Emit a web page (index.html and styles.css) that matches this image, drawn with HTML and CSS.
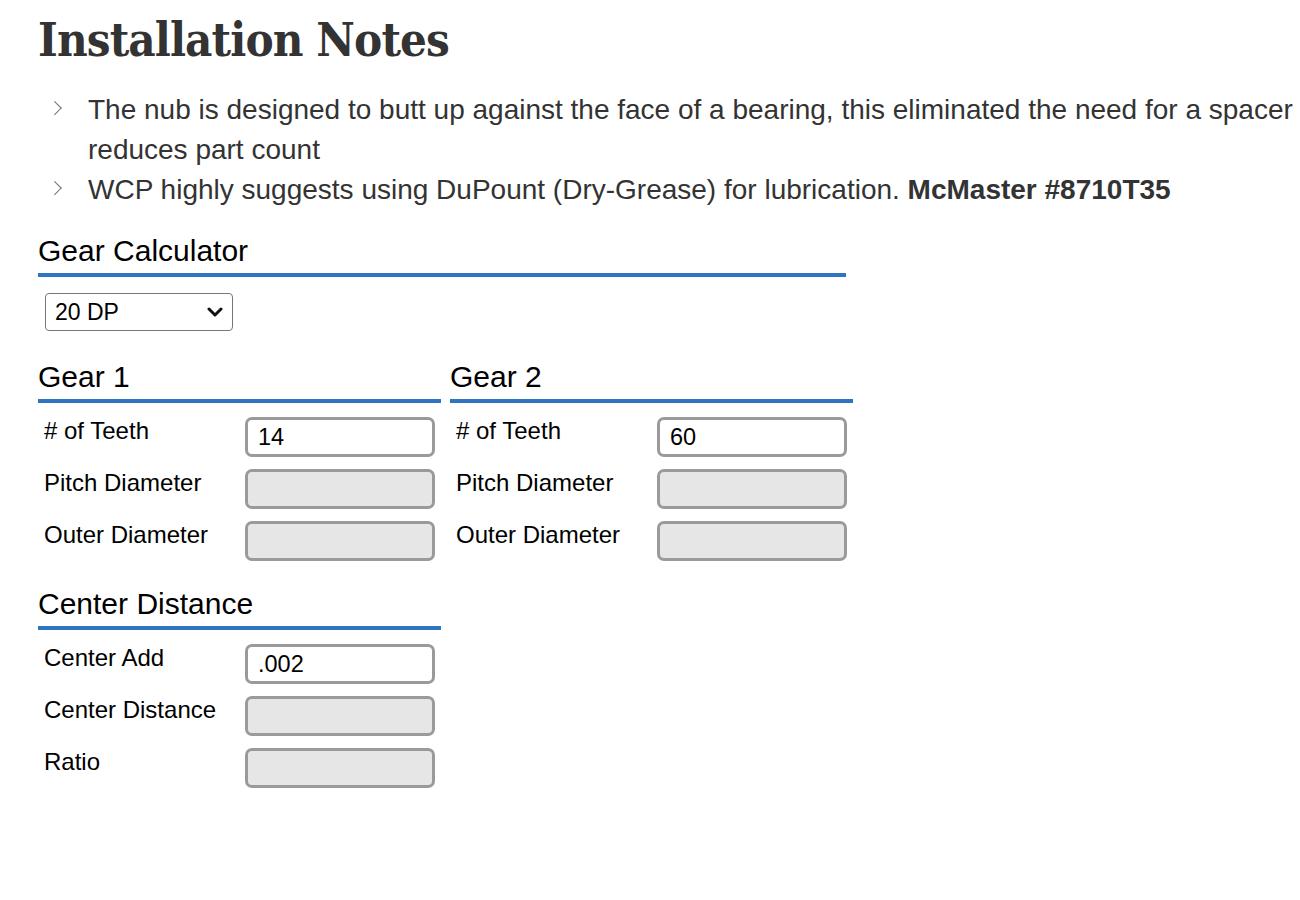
FILE: index.html
```html
<!DOCTYPE html>
<html lang="en">
<head>
<meta charset="utf-8">
<title>Installation Notes</title>
<link rel="stylesheet" href="styles.css">
</head>
<body>
<main class="page">
  <h1 class="title">Installation Notes</h1>
  <ul class="notes">
    <li>The nub is designed to butt up against the face of a bearing, this eliminated the need for a spacer reduces part count</li>
    <li>WCP highly suggests using DuPount (Dry-Grease) for lubrication. <strong>McMaster #8710T35</strong></li>
  </ul>

  <section class="calc">
    <h3 class="sec-head">Gear Calculator</h3>
    <div class="select-wrap">
      <select class="dp-select">
        <option>20 DP</option>
        <option>32 DP</option>
      </select>
      <svg class="select-arrow" width="16" height="10" viewBox="0 0 16 10"><polyline points="2,2 8,8 14,2" fill="none" stroke="#111" stroke-width="3" stroke-linecap="round" stroke-linejoin="round"/></svg>
    </div>
  </section>

  <div class="gears">
    <section class="gear">
      <h3 class="sec-head">Gear 1</h3>
      <div class="row"><label class="lbl"># of Teeth</label><input class="field" type="text" value="14"></div>
      <div class="row"><label class="lbl">Pitch Diameter</label><input class="field ro" type="text" readonly></div>
      <div class="row"><label class="lbl">Outer Diameter</label><input class="field ro" type="text" readonly></div>
    </section>
    <section class="gear">
      <h3 class="sec-head">Gear 2</h3>
      <div class="row"><label class="lbl"># of Teeth</label><input class="field" type="text" value="60"></div>
      <div class="row"><label class="lbl">Pitch Diameter</label><input class="field ro" type="text" readonly></div>
      <div class="row"><label class="lbl">Outer Diameter</label><input class="field ro" type="text" readonly></div>
    </section>
  </div>

  <section class="center">
    <h3 class="sec-head">Center Distance</h3>
    <div class="row"><label class="lbl">Center Add</label><input class="field" type="text" value=".002"></div>
    <div class="row"><label class="lbl">Center Distance</label><input class="field ro" type="text" readonly></div>
    <div class="row"><label class="lbl">Ratio</label><input class="field ro" type="text" readonly></div>
  </section>
</main>
</body>
</html>
```

FILE: styles.css
```css
html, body {
  margin: 0;
  padding: 0;
  background: #fff;
}
body {
  font-family: "Liberation Sans", Arial, Helvetica, sans-serif;
  color: #000;
}
.page {
  padding: 10px 0 0 38px;
}
.title {
  margin: 0;
  font-family: "DejaVu Serif Condensed", "DejaVu Serif", "Liberation Serif", serif;
  font-weight: 600;
  font-size: 47px;
  line-height: 60px;
  color: #333;
  letter-spacing: -0.9px;
}
.notes {
  list-style: none;
  margin: 20px 0 0 0;
  padding: 0 0 0 50px;
  font-size: 28px;
  line-height: 40px;
  color: #333;
}
.notes li {
  position: relative;
}
.notes li::before {
  content: "";
  position: absolute;
  left: -38px;
  top: 13px;
  width: 8.5px;
  height: 8.5px;
  border-top: 1.8px solid #6e6e6e;
  border-right: 1.8px solid #6e6e6e;
  transform: rotate(45deg);
}
.notes strong {
  font-weight: 700;
}
.calc {
  width: 808px;
  margin-top: 23px;
}
.sec-head {
  margin: 0;
  font-size: 30px;
  line-height: 36px;
  font-weight: 400;
  color: #000;
  padding-bottom: 4px;
  border-bottom: 4px solid #2f74c0;
}
.select-wrap {
  position: relative;
  display: inline-block;
  margin: 16px 0 0 7px;
}
.dp-select {
  appearance: none;
  -webkit-appearance: none;
  width: 188px;
  height: 38px;
  box-sizing: border-box;
  border: 1px solid #767676;
  border-radius: 4px;
  background: #fff;
  padding: 0 0 0 9px;
  font-family: "Liberation Sans", Arial, sans-serif;
  font-size: 23px;
  color: #000;
  display: block;
}
.select-arrow {
  position: absolute;
  right: 10px;
  top: 14px;
  pointer-events: none;
}
.gears {
  display: grid;
  grid-template-columns: 403px 403px;
  column-gap: 9px;
  margin-top: 28px;
}
.row {
  display: flex;
  align-items: flex-start;
  margin-bottom: 12px;
}
.sec-head + .row {
  margin-top: 14px;
}
.lbl {
  width: 201px;
  padding-left: 6px;
  font-size: 24px;
  line-height: 28px;
  color: #000;
}
.field {
  width: 190px;
  height: 40px;
  box-sizing: border-box;
  border: 3px solid #9a9a9a;
  border-radius: 7px;
  background: #fff;
  padding: 0 10px;
  font-family: "Liberation Sans", Arial, sans-serif;
  font-size: 23.5px;
  color: #000;
  margin: 0;
  outline: none;
}
.field.ro {
  background: #e6e6e6;
}
.center {
  width: 403px;
  margin-top: 13px;
}
```
